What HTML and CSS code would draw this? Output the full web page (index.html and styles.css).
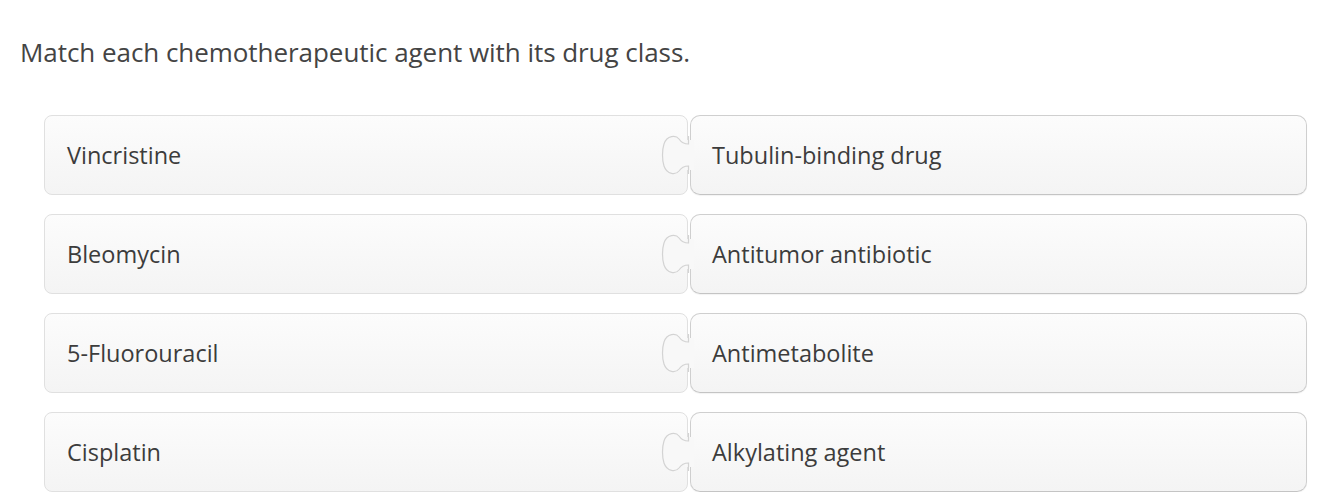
FILE: index.html
```html
<!DOCTYPE html>
<html>
<head>
<meta charset="utf-8">
<link rel="stylesheet" href="styles.css">
</head>
<body>
<h1 class="title">Match each chemotherapeutic agent with its drug class.</h1>
<div class="list">
  <div class="row">
    <div class="cell left">Vincristine</div>
    <div class="cell right">Tubulin-binding drug</div>
    <svg class="knob" width="36" height="46" viewBox="0 0 36 46"><path class="knob-fill" d="M26 11 L30 11 C24 11 22 10 20 7 C17 3 8 3 5 12 C3 18 3 28 5 34 C8 43 17 43 20 39 C22 36 24 35 30 35 L26 35 L26 38 L35 38 L35 8 L26 8 Z"/><path class="knob-line" d="M29.5 4 L29.5 12 C24 12 22 10 20 7 C17 3 8 3 5 12 C3 18 3 28 5 34 C8 43 17 43 20 39 C22 36 24 34 29.5 34 L29.5 42"/></svg>
  </div>
  <div class="row">
    <div class="cell left">Bleomycin</div>
    <div class="cell right">Antitumor antibiotic</div>
    <svg class="knob" width="36" height="46" viewBox="0 0 36 46"><path class="knob-fill" d="M26 11 L30 11 C24 11 22 10 20 7 C17 3 8 3 5 12 C3 18 3 28 5 34 C8 43 17 43 20 39 C22 36 24 35 30 35 L26 35 L26 38 L35 38 L35 8 L26 8 Z"/><path class="knob-line" d="M29.5 4 L29.5 12 C24 12 22 10 20 7 C17 3 8 3 5 12 C3 18 3 28 5 34 C8 43 17 43 20 39 C22 36 24 34 29.5 34 L29.5 42"/></svg>
  </div>
  <div class="row">
    <div class="cell left">5-Fluorouracil</div>
    <div class="cell right">Antimetabolite</div>
    <svg class="knob" width="36" height="46" viewBox="0 0 36 46"><path class="knob-fill" d="M26 11 L30 11 C24 11 22 10 20 7 C17 3 8 3 5 12 C3 18 3 28 5 34 C8 43 17 43 20 39 C22 36 24 35 30 35 L26 35 L26 38 L35 38 L35 8 L26 8 Z"/><path class="knob-line" d="M29.5 4 L29.5 12 C24 12 22 10 20 7 C17 3 8 3 5 12 C3 18 3 28 5 34 C8 43 17 43 20 39 C22 36 24 34 29.5 34 L29.5 42"/></svg>
  </div>
  <div class="row">
    <div class="cell left">Cisplatin</div>
    <div class="cell right">Alkylating agent</div>
    <svg class="knob" width="36" height="46" viewBox="0 0 36 46"><path class="knob-fill" d="M26 11 L30 11 C24 11 22 10 20 7 C17 3 8 3 5 12 C3 18 3 28 5 34 C8 43 17 43 20 39 C22 36 24 35 30 35 L26 35 L26 38 L35 38 L35 8 L26 8 Z"/><path class="knob-line" d="M29.5 4 L29.5 12 C24 12 22 10 20 7 C17 3 8 3 5 12 C3 18 3 28 5 34 C8 43 17 43 20 39 C22 36 24 34 29.5 34 L29.5 42"/></svg>
  </div>
</div>
</body>
</html>
```
FILE: styles.css
```css
html, body {
  margin: 0;
  padding: 0;
  background: #ffffff;
}
body {
  font-family: "Open Sans", "Noto Sans", sans-serif;
  color: #404040;
}
.title {
  margin: 0;
  padding: 36px 0 0 20px;
  font-size: 26px;
  font-weight: 400;
  line-height: 32px;
  color: #444444;
  letter-spacing: -0.05px;
}
.list {
  display: flex;
  flex-direction: column;
  gap: 19px;
  padding: 47px 27px 0 44px;
}
.row {
  position: relative;
  display: flex;
  gap: 2px;
  height: 80px;
}
.cell {
  box-sizing: border-box;
  height: 80px;
  display: flex;
  align-items: center;
  font-size: 23.5px;
  letter-spacing: 0;
  color: #3c3c3c;
  background: linear-gradient(#fcfcfc, #f4f4f4);
}
.left {
  flex: 0 0 644px;
  padding-left: 22px;
  border: 1px solid #e0e0e0;
  border-radius: 8px;
}
.right {
  flex: 1;
  padding-left: 21px;
  border: 1px solid #cfcfcf;
  border-bottom-color: #c4c4c4;
  border-radius: 10px;
  box-shadow: 0 1px 1px rgba(0,0,0,0.05);
}
.knob {
  position: absolute;
  left: 615px;
  top: 17px;
  overflow: visible;
}
.knob-fill {
  fill: #f8f8f8;
  stroke: none;
}
.knob-line {
  fill: none;
  stroke: #d3d3d3;
  stroke-width: 1.2;
}
```
